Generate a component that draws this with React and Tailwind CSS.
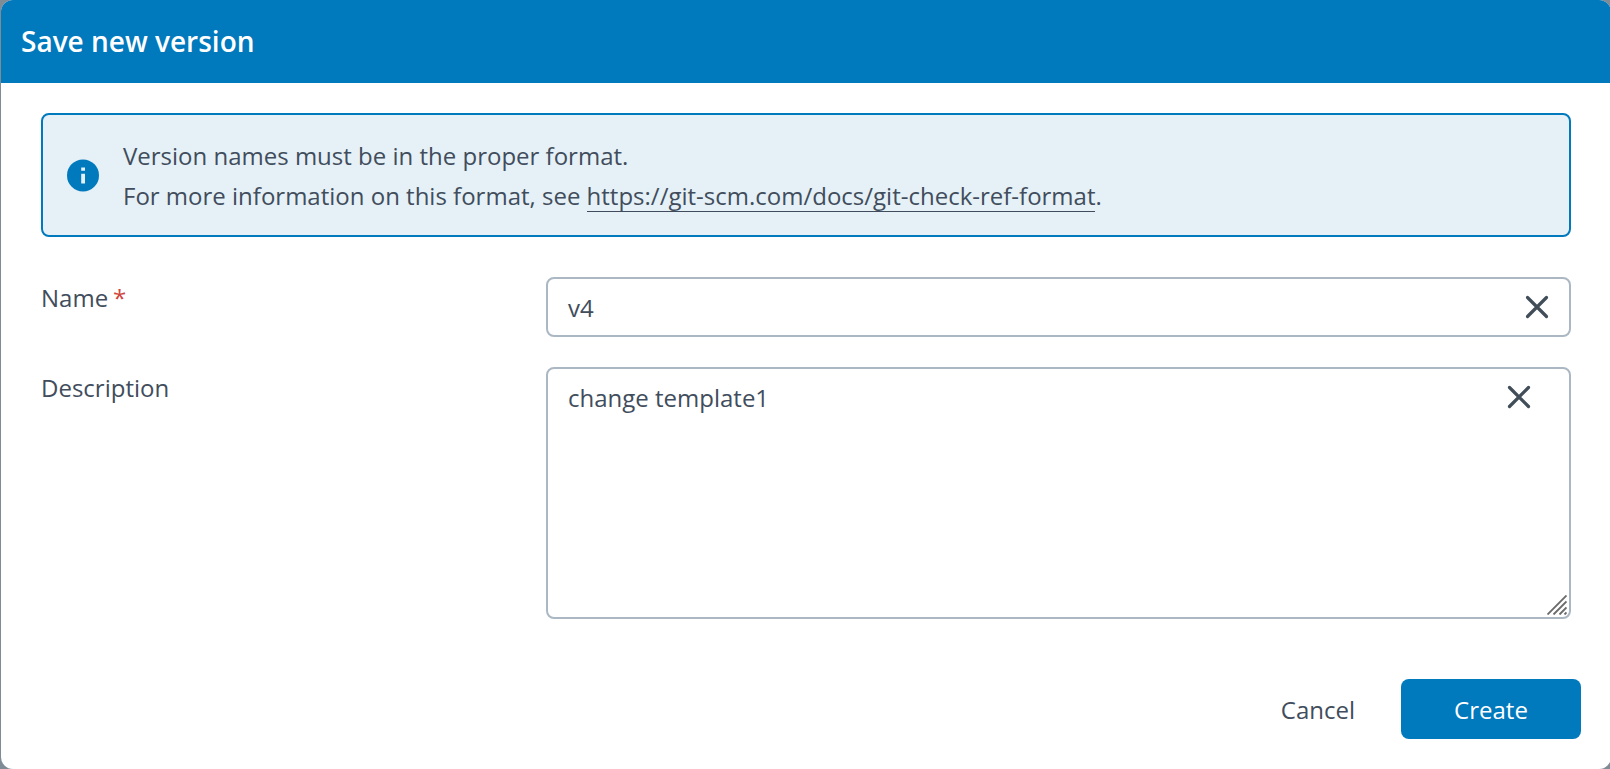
function InfoIcon() {
  return (
    <svg className="h-[33px] w-8 shrink-0" viewBox="0 0 32 33">
      <circle cx="16" cy="16.4" r="16" fill="#0079bd" />
      <path d="M14.2 8.5h3.8v3.2h-3.8zM14.2 14.8h3.8v9.8h-3.8z" fill="#e6f1f7" />
    </svg>
  );
}

function ClearIcon() {
  return (
    <svg className="h-6 w-6" viewBox="0 0 24 24" fill="none" stroke="#414d58" strokeWidth="3.2" strokeLinecap="round">
      <path d="M2.5 2.5L21.5 21.5M21.5 2.5L2.5 21.5" />
    </svg>
  );
}

function ResizeGrip() {
  return (
    <svg className="h-5 w-5" viewBox="0 0 20 20" fill="none" stroke="#6b6b6b" strokeWidth="1.9">
      <path d="M0.5 19.5L19.5 0.5M6.5 19.5L19.5 6.5M12.5 19.5L19.5 12.5M17.5 19.5L19.5 17.5" />
    </svg>
  );
}

export default function App() {
  return (
    <div className="h-[769px] w-[1610px] overflow-hidden bg-[#7f8c96] pl-px font-['Open_Sans',sans-serif] text-[24px] leading-10 text-[#414d5c]">
      <div className="flex h-full w-[1610px] flex-col overflow-hidden rounded-xl bg-white">
        <header className="flex h-[83px] shrink-0 items-center bg-[#0079bd] pb-px pl-5 text-[28px] font-semibold text-white">
          <h1>Save new version</h1>
        </header>
        <main className="flex flex-col pt-[30px] pr-10 pl-10">
          <div className="flex h-[124px] items-center gap-6 rounded-lg border-2 border-[#0079bd] bg-[#e6f1f7] pl-6">
            <InfoIcon />
            <div className="pt-0.5">
              <p>Version names must be in the proper format.</p>
              <p>
                For more information on this format, see{" "}
                <a className="bg-[linear-gradient(#414d5c,#414d5c)] bg-[length:100%_1px] bg-[position:0_100%] bg-no-repeat">https://git-scm.com/docs/git-check-ref-format</a>.
              </p>
            </div>
          </div>
          <div className="mt-10 flex h-[60px]">
            <label className="w-[505px] pt-px">
              Name<span className="ml-[5px] text-[#d0453c]">*</span>
            </label>
            <div className="flex flex-1 items-center justify-between rounded-lg border-2 border-[#abb8c3] pr-5 pl-5">
              <span className="pt-0.5">v4</span>
              <ClearIcon />
            </div>
          </div>
          <div className="mt-[30px] flex h-[252px]">
            <label className="w-[505px] pt-px">Description</label>
            <div className="flex flex-1 flex-col justify-between rounded-lg border-2 border-[#abb8c3] pt-[7px] pl-5">
              <div className="flex items-center justify-between pr-[38px]">
                <span className="pt-0.5">change template1</span>
                <ClearIcon />
              </div>
              <div className="flex justify-end pr-0.5 pb-0.5">
                <ResizeGrip />
              </div>
            </div>
          </div>
        </main>
        <footer className="mt-[60px] flex items-center justify-end gap-[46px] pr-[30px]">
          <button className="pt-0.5">Cancel</button>
          <button className="h-[60px] w-[180px] rounded-lg bg-[#0079bd] pt-0.5 text-white">Create</button>
        </footer>
      </div>
    </div>
  );
}
